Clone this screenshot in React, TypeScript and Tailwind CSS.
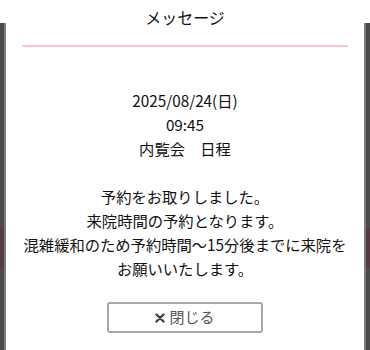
const lines = [
  "2025/08/24(日)",
  "09:45",
  "内覧会　日程",
  "",
  "予約をお取りしました。",
  "来院時間の予約となります。",
  "混雑緩和のため予約時間～15分後までに来院を",
  "お願いいたします。",
]

function Backdrop({ side }: { side: "left" | "right" }) {
  return (
    <div className="flex w-[6px] shrink-0 flex-col">
      <div className="h-[23px] bg-white" />
      <div
        className={
          side === "left"
            ? "flex flex-1 flex-col border-r-2 border-[#7d7d7d] bg-[#4a4a4a]"
            : "flex flex-1 flex-col border-l-2 border-[#7d7d7d] bg-[#4a4a4a]"
        }
      >
        <div className="h-[205px]" />
        <div className="h-[40px] bg-[#553a42]" />
      </div>
    </div>
  )
}

export default function App() {
  return (
    <div
      className="flex h-[350px] w-full overflow-hidden bg-white text-[#111]"
      style={{ fontFamily: '"Noto Sans CJK JP", "Noto Sans", sans-serif' }}
    >
      <Backdrop side="left" />

      <div className="flex flex-1 flex-col items-center bg-white">
        {/* header */}
        <div className="flex h-[33px] w-full items-center justify-center text-[16px]">
          メッセージ
        </div>
        <div className="mt-[12px] h-[2px] w-[326px] bg-[#ffc2d0]" />

        {/* body */}
        <div className="mt-[41px] flex flex-col items-center text-center text-[15.3px] leading-[24px]">
          {lines.map((line, i) => (
            <p key={i} className="h-[24px] whitespace-nowrap">
              {line}
            </p>
          ))}
        </div>

        <button className="mt-[22px] flex h-[31px] w-[156px] items-center justify-center gap-1 rounded-[3px] border-2 border-[#a8a8a8] bg-white text-[15px] text-[#555]">
          <svg width="10" height="10" viewBox="0 0 10 10" className="mt-[1px]">
            <path
              d="M1.5 1.5 L8.5 8.5 M8.5 1.5 L1.5 8.5"
              stroke="#444"
              strokeWidth="2.4"
              strokeLinecap="round"
            />
          </svg>
          閉じる
        </button>
      </div>

      <Backdrop side="right" />
    </div>
  )
}
